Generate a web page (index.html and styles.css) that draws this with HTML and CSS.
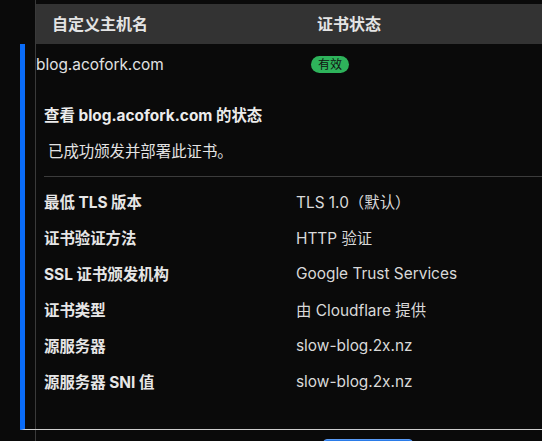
FILE: index.html
```html
<!DOCTYPE html>
<html lang="zh-CN">
<head>
<meta charset="utf-8">
<title>自定义主机名</title>
<link rel="stylesheet" href="styles.css">
</head>
<body>
  <div class="table">
    <div class="thead">
      <div class="th">自定义主机名</div>
      <div class="th">证书状态</div>
    </div>
    <div class="row expanded">
      <div class="row-main">
        <div class="host">blog.acofork.com</div>
        <div class="status"><span class="badge">有效</span></div>
      </div>
      <div class="detail">
        <h3 class="detail-title">查看 blog.acofork.com 的状态</h3>
        <p class="detail-text">已成功颁发并部署此证书。</p>
        <dl class="props">
          <div class="prop"><dt>最低 TLS 版本</dt><dd>TLS 1.0（默认）</dd></div>
          <div class="prop"><dt>证书验证方法</dt><dd>HTTP 验证</dd></div>
          <div class="prop"><dt>SSL 证书颁发机构</dt><dd>Google Trust Services</dd></div>
          <div class="prop"><dt>证书类型</dt><dd>由 Cloudflare 提供</dd></div>
          <div class="prop"><dt>源服务器</dt><dd>slow-blog.2x.nz</dd></div>
          <div class="prop"><dt>源服务器 SNI 值</dt><dd>slow-blog.2x.nz</dd></div>
        </dl>
      </div>
    </div>
    <div class="footer">
      <button class="btn" type="button" aria-label="保存"></button>
    </div>
  </div>
</body>
</html>
```

FILE: styles.css
```css
html, body {
  margin: 0;
  padding: 0;
  background: #0a0a0a;
  overflow: hidden;
}
body {
  font-family: Inter, "Noto Sans CJK SC", sans-serif;
  color: #e2e2e2;
  font-size: 15.4px;
  width: 542px;
  height: 441px;
}
.table {
  margin-left: 35px;
  border-left: 1px solid #3a3a3a;
  padding-top: 4px;
}
.thead {
  display: grid;
  grid-template-columns: 265px 1fr;
  height: 40px;
  background: #333333;
}
.th {
  padding-left: 16px;
  line-height: 40px;
  font-size: 16px;
  font-weight: 700;
  color: #e4e4e4;
}
.expanded {
  margin-left: -16px;
  border-left: 5px solid #0a6cf8;
  border-bottom: 1px solid #cfcfcf;
}
.row-main {
  display: grid;
  grid-template-columns: 275px 1fr;
  padding: 11px 0 11px 11px;
  line-height: 20px;
}
.host {
  color: #e2e2e2;
}
.badge {
  display: inline-block;
  margin-top: 1px;
  height: 17px;
  line-height: 17px;
  padding: 0 7px;
  border-radius: 9px;
  background: #2eb35b;
  color: #111;
  font-size: 12px;
  vertical-align: top;
}
.detail {
  padding: 20px 0 30px 19px;
}
.detail-title {
  margin: 0 0 16px;
  font-size: 15.4px;
  line-height: 20px;
  font-weight: 700;
  color: #ececec;
}
.detail-text {
  margin: 0;
  padding: 0 0 14px 4px;
  line-height: 20px;
  color: #e4e4e4;
  border-bottom: 1px solid #3c3c3c;
}
.props {
  margin: 0;
  padding-top: 6px;
}
.prop {
  display: grid;
  grid-template-columns: 252px 1fr;
  height: 36px;
  align-items: center;
}
.prop dt {
  font-weight: 700;
  color: #e6e6e6;
}
.prop dd {
  margin: 0;
  color: #d9d9d9;
}
.footer {
  height: 11px;
  overflow: hidden;
  padding: 9px 0 0 287px;
  box-sizing: border-box;
}
.btn {
  display: block;
  width: 90px;
  height: 34px;
  border: 1px solid #5b9cf5;
  border-radius: 4px;
  background: #2a7be8;
}
```
